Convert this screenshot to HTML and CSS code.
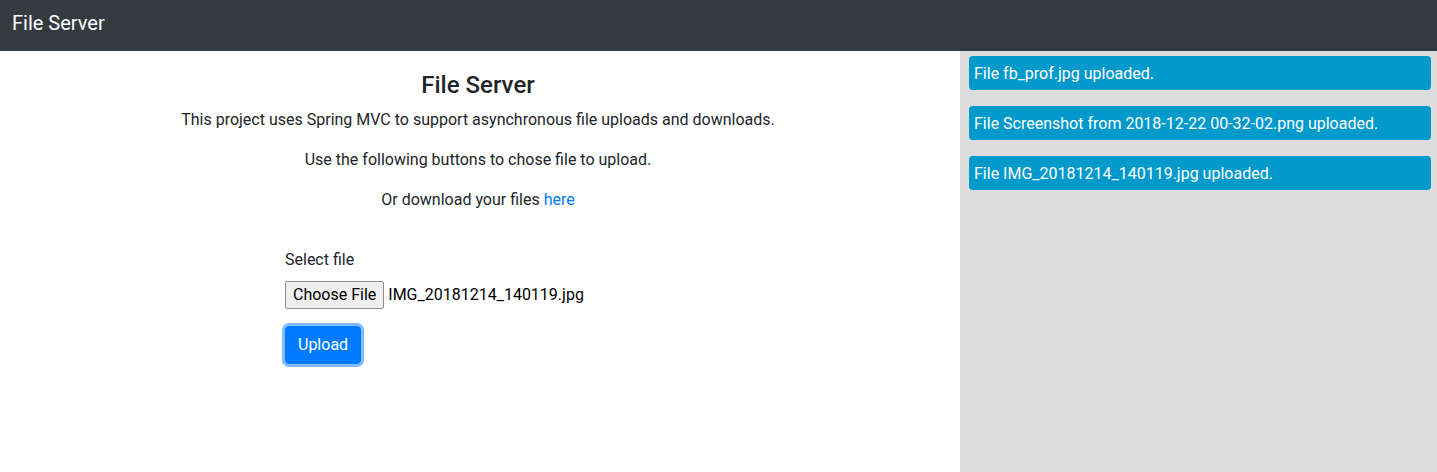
FILE: index.html
```html
<!DOCTYPE html>
<html lang="en">
<head>
<meta charset="utf-8">
<title>File Server</title>
<link rel="stylesheet" href="styles.css">
</head>
<body>
<nav class="navbar"><span class="brand">File Server</span></nav>
<div class="layout">
  <main class="main">
    <h4 class="title">File Server</h4>
    <p>This project uses Spring MVC to support asynchronous file uploads and downloads.</p>
    <p>Use the following buttons to chose file to upload.</p>
    <p>Or download your files <a href="#">here</a></p>
    <form class="upload-form">
      <div class="form-group">
        <label class="label">Select file</label>
        <div class="file-input"><span class="file-btn">Choose File</span><span class="file-name">IMG_20181214_140119.jpg</span></div>
      </div>
      <button type="button" class="btn">Upload</button>
    </form>
  </main>
  <aside class="sidebar">
    <div class="note">File fb_prof.jpg uploaded.</div>
    <div class="note">File Screenshot from 2018-12-22 00-32-02.png uploaded.</div>
    <div class="note">File IMG_20181214_140119.jpg uploaded.</div>
  </aside>
</div>
</body>
</html>
```
FILE: styles.css
```css
* { box-sizing: border-box; }
html, body { margin: 0; height: 100%; }
body {
  font-family: Roboto, "Liberation Sans", sans-serif;
  font-size: 16px;
  line-height: 24px;
  color: #212529;
  background: #fff;
  display: flex;
  flex-direction: column;
}
.navbar {
  height: 51px;
  background: #343a40;
  display: flex;
  align-items: flex-start;
  padding: 8px 12px 0;
  flex: none;
}
.brand {
  color: #fff;
  font-size: 20px;
  line-height: 30px;
}
.layout {
  flex: 1;
  display: flex;
}
.main {
  width: 960px;
  flex: none;
  padding: 20px 4px 0 0;
  text-align: center;
}
.title {
  margin: 0 0 8px;
  font-size: 24px;
  font-weight: 500;
  line-height: 29px;
}
.main p { margin: 0 0 16px; }
.main a { color: #007bff; text-decoration: none; }
.upload-form {
  text-align: left;
  margin: 36px 0 0 285px;
}
.form-group { margin-bottom: 17px; }
.label {
  display: block;
  margin-bottom: 9px;
}
.file-input {
  display: flex;
  align-items: center;
  height: 28px;
}
.file-btn {
  display: inline-flex;
  align-items: center;
  height: 28px;
  padding: 0 7px;
  background: #efefef;
  border: 1px solid #8f8f8f;
  border-radius: 2px;
  color: #000;
  margin-right: 4px;
}
.file-name { color: #000; }
.btn {
  font-family: inherit;
  font-size: 16px;
  line-height: 24px;
  color: #fff;
  background: #007bff;
  border: 1px solid #007bff;
  border-radius: 4px;
  padding: 6px 12px;
  box-shadow: 0 0 0 3px rgba(0, 123, 255, 0.5);
  cursor: pointer;
}
.sidebar {
  flex: 1;
  background: #dddddd;
  padding: 5px 6px 0 9px;
}
.note {
  background: #0099cc;
  color: #fff;
  border-radius: 4px;
  height: 34px;
  line-height: 32px;
  padding: 2px 5px 0;
  margin-bottom: 16px;
}
```
